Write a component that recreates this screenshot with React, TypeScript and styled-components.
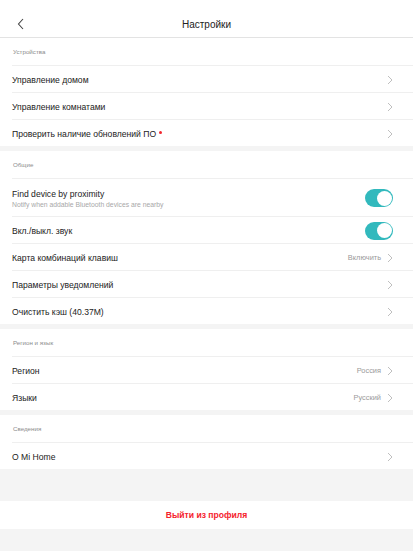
import styled, { createGlobalStyle } from "styled-components";

const GlobalStyle = createGlobalStyle`
  html, body {
    margin: 0;
    padding: 0;
    background: #f4f4f4;
    font-family: "Liberation Sans", Arial, sans-serif;
    -webkit-font-smoothing: antialiased;
  }
`;

type RowItem = {
  title: string;
  subtitle?: string;
  value?: string;
  toggle?: boolean;
  dot?: boolean;
};

type SectionData = {
  label: string;
  rows: RowItem[];
};

const sections: SectionData[] = [
  {
    label: "Устройства",
    rows: [
      { title: "Управление домом" },
      { title: "Управление комнатами" },
      { title: "Проверить наличие обновлений ПО", dot: true },
    ],
  },
  {
    label: "Общие",
    rows: [
      {
        title: "Find device by proximity",
        subtitle: "Notify when addable Bluetooth devices are nearby",
        toggle: true,
      },
      { title: "Вкл./выкл. звук", toggle: true },
      { title: "Карта комбинаций клавиш", value: "Включить" },
      { title: "Параметры уведомлений" },
      { title: "Очистить кэш (40.37M)" },
    ],
  },
  {
    label: "Регион и язык",
    rows: [
      { title: "Регион", value: "Россия" },
      { title: "Языки", value: "Русский" },
    ],
  },
  {
    label: "Сведения",
    rows: [{ title: "О Mi Home" }],
  },
];

function Chevron() {
  return (
    <ChevronSvg width="6" height="10" viewBox="0 0 6 10">
      <path d="M1 1 L5 5 L1 9" fill="none" stroke="#b8b8b8" strokeWidth="0.9" />
    </ChevronSvg>
  );
}

function App() {
  return (
    <Page>
      <GlobalStyle />
      <Header>
        <BackButton>
          <svg width="8" height="12" viewBox="0 0 8 12">
            <path d="M6 1 L1.5 6 L6 11" fill="none" stroke="#444" strokeWidth="1.1" />
          </svg>
        </BackButton>
        <Title>Настройки</Title>
      </Header>

      {sections.map((section) => (
        <Section key={section.label}>
          <SectionLabel>{section.label}</SectionLabel>
          {section.rows.map((row) => (
            <Row key={row.title} $tall={!!row.subtitle}>
              <RowText>
                <RowTitle>
                  {row.title}
                  {row.dot ? <RedDot /> : null}
                </RowTitle>
                {row.subtitle ? <RowSubtitle>{row.subtitle}</RowSubtitle> : null}
              </RowText>
              {row.toggle ? (
                <Toggle>
                  <Knob />
                </Toggle>
              ) : (
                <RowRight>
                  {row.value ? <RowValue>{row.value}</RowValue> : null}
                  <Chevron />
                </RowRight>
              )}
            </Row>
          ))}
        </Section>
      ))}

      <LogoutBar>Выйти из профиля</LogoutBar>
    </Page>
  );
}

export default App;

const Page = styled.div`
  min-height: 100vh;
  background: #f4f4f4;
`;

const Header = styled.div`
  height: 38px;
  background: #fff;
  border-bottom: 1px solid #e3e3e3;
  display: flex;
  align-items: center;
  justify-content: center;
  position: relative;
  padding-top: 11px;
  box-sizing: border-box;
`;

const BackButton = styled.div`
  position: absolute;
  left: 17px;
  top: 18px;
  display: flex;
`;

const Title = styled.div`
  font-size: 10px;
  color: #222;
`;

const Section = styled.div`
  background: #fff;
  margin-bottom: 5px;
`;

const SectionLabel = styled.div`
  height: 27px;
  padding-left: 13px;
  display: flex;
  align-items: center;
  font-size: 6.2px;
  color: #8c8c8c;
`;

const Row = styled.div<{ $tall?: boolean }>`
  height: ${(p) => (p.$tall ? "38px" : "27px")};
  box-sizing: border-box;
  margin-left: 12px;
  padding-right: 20px;
  padding-top: 1px;
  border-top: 1px solid #efefef;
  display: flex;
  align-items: center;
  justify-content: space-between;
`;

const RowText = styled.div`
  display: flex;
  flex-direction: column;
  gap: 2px;
`;

const RowTitle = styled.div`
  font-size: 8.6px;
  color: #222;
  display: flex;
  align-items: center;
`;

const RedDot = styled.span`
  width: 3px;
  height: 3px;
  border-radius: 50%;
  background: #f2262e;
  margin-left: 3px;
  margin-top: -2px;
`;

const RowSubtitle = styled.div`
  font-size: 6.8px;
  color: #a8a8a8;
`;

const RowRight = styled.div`
  display: flex;
  align-items: center;
  gap: 6px;
`;

const RowValue = styled.div`
  font-size: 7.4px;
  color: #9a9a9a;
`;

const ChevronSvg = styled.svg`
  display: block;
`;

const Toggle = styled.div`
  width: 28px;
  height: 18px;
  border-radius: 9px;
  background: #32b9bd;
  position: relative;
`;

const Knob = styled.div`
  position: absolute;
  right: 1.5px;
  top: 1.5px;
  width: 15px;
  height: 15px;
  border-radius: 50%;
  background: #fff;
`;

const LogoutBar = styled.div`
  margin-top: 32px;
  height: 28px;
  background: #fff;
  display: flex;
  align-items: center;
  justify-content: center;
  font-size: 8.6px;
  font-weight: bold;
  color: #f5222d;
`;
